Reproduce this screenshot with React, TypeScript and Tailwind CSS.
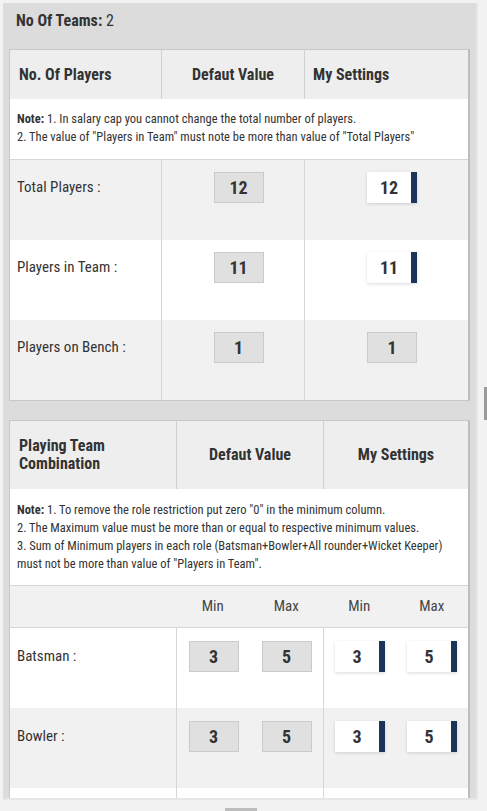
import React from "react";

const font =
  "font-['Roboto_Condensed','Liberation_Sans_Narrow','DejaVu_Sans_Condensed',Roboto,sans-serif]";

const DefaultBox = ({ value }: { value: number }) => (
  <div className="w-[50px] h-[31px] bg-[#e0e0e0] border border-[#cacaca] flex items-center justify-center text-[18px] font-bold text-[#333]">
    {value}
  </div>
);

const SettingBox = ({ value }: { value: number }) => (
  <div className="flex h-[31px] shadow-[0_1px_3px_rgba(0,0,0,0.15)]">
    <div className="w-[44px] bg-white flex items-center justify-center text-[18px] font-bold text-[#333]">
      {value}
    </div>
    <div className="w-[6px] bg-[#1c3458]" />
  </div>
);

const PlayerRow = ({
  label,
  def,
  mine,
  white,
  locked,
}: {
  label: string;
  def: number;
  mine: number;
  white?: boolean;
  locked?: boolean;
}) => (
  <div
    className={`grid grid-cols-[151px_143px_1fr] h-[80px] ${white ? "bg-white" : "bg-[#f2f1f2]"}`}
  >
    <div className="pl-[7px] pt-[12px]">
      <div className="h-[31px] flex items-center text-[15px] text-[#333]">{label}</div>
    </div>
    <div className="border-l border-[#d6d6d6] pt-[12px] pl-[11px] flex justify-center items-start">
      <DefaultBox value={def} />
    </div>
    <div className="border-l border-[#d6d6d6] pt-[12px] pl-[11px] flex justify-center items-start">
      {locked ? <DefaultBox value={mine} /> : <SettingBox value={mine} />}
    </div>
  </div>
);

const RoleRow = ({
  label,
  white,
}: {
  label: string;
  white?: boolean;
}) => (
  <div
    className={`grid grid-cols-[166px_147px_1fr] h-[80px] ${white ? "bg-white" : "bg-[#f2f1f2]"}`}
  >
    <div className="pl-[7px] pt-[13px]">
      <div className="h-[31px] flex items-center text-[15px] text-[#333]">{label}</div>
    </div>
    <div className="border-l border-[#d6d6d6] pt-[13px] grid grid-cols-2">
      <div className="flex justify-center items-start">
        <DefaultBox value={3} />
      </div>
      <div className="flex justify-center items-start">
        <DefaultBox value={5} />
      </div>
    </div>
    <div className="border-l border-[#d6d6d6] pt-[13px] grid grid-cols-2">
      <div className="flex justify-center items-start">
        <SettingBox value={3} />
      </div>
      <div className="flex justify-center items-start">
        <SettingBox value={5} />
      </div>
    </div>
  </div>
);

export default function App() {
  return (
    <div className={`relative min-h-[811px] bg-[#f2f2f2] pt-[3px] pl-[3px] overflow-hidden ${font}`}>
      {/* main panel */}
      <div className="w-[475px] h-[797px] bg-[#dcdcdc] border-r-2 border-b-2 border-[#e6e6e6] overflow-hidden px-[6px]">
        <div className="pt-[7px] pl-[7px] h-[46px] text-[16px] leading-[22px] text-[#333]">
          <span className="font-bold">No Of Teams:</span> 2
        </div>

        {/* No. of players */}
        <div className="border border-[#c8c8c8] border-r-2 border-r-[#bdbdbd]">
          <div className="grid grid-cols-[151px_143px_1fr] h-[49px] bg-[#eeeeee] text-[16px] font-bold text-[#333]">
            <div className="flex items-center pl-[9px]">No. Of Players</div>
            <div className="flex items-center justify-center border-l border-[#d0d0d0]">Defaut Value</div>
            <div className="flex items-center pl-[8px] border-l border-[#d0d0d0]">My Settings</div>
          </div>
          <div className="bg-white h-[61px] pl-[7px] pt-[11px] text-[12.5px] leading-[18px] text-[#333] border-b border-[#d6d6d6]">
            <p>
              <span className="font-bold">Note:</span> 1. In salary cap you cannot change the total number of players.
            </p>
            <p>2. The value of "Players in Team" must note be more than value of "Total Players"</p>
          </div>
          <PlayerRow label="Total Players :" def={12} mine={12} />
          <PlayerRow label="Players in Team :" def={11} mine={11} white />
          <PlayerRow label="Players on Bench :" def={1} mine={1} locked />
        </div>

        {/* Playing team combination */}
        <div className="mt-[19px] border border-[#c8c8c8] border-r-2 border-r-[#bdbdbd]">
          <div className="grid grid-cols-[166px_147px_1fr] h-[68px] bg-[#eeeeee] text-[16px] font-bold text-[#333]">
            <div className="flex items-center pl-[9px] leading-[18px]">
              Playing Team
              <br />
              Combination
            </div>
            <div className="flex items-center justify-center border-l border-[#d0d0d0]">Defaut Value</div>
            <div className="flex items-center justify-center border-l border-[#d0d0d0]">My Settings</div>
          </div>
          <div className="bg-white h-[97px] pl-[7px] pt-[12px] text-[12.5px] leading-[18px] text-[#333] border-b border-[#d6d6d6]">
            <p>
              <span className="font-bold">Note:</span> 1. To remove the role restriction put zero "0" in the minimum column.
            </p>
            <p>2. The Maximum value must be more than or equal to respective minimum values.</p>
            <p>3. Sum of Minimum players in each role (Batsman+Bowler+All rounder+Wicket Keeper)</p>
            <p>must not be more than value of "Players in Team".</p>
          </div>
          <div className="grid grid-cols-[166px_147px_1fr] h-[42px] bg-[#f2f1f2] border-b border-[#d6d6d6] text-[15px] text-[#444]">
            <div />
            <div className="grid grid-cols-2">
              <div className="flex items-center justify-center">Min</div>
              <div className="flex items-center justify-center">Max</div>
            </div>
            <div className="grid grid-cols-2">
              <div className="flex items-center justify-center">Min</div>
              <div className="flex items-center justify-center">Max</div>
            </div>
          </div>
          <RoleRow label="Batsman :" white />
          <RoleRow label="Bowler :" />
          {/* next row, only its top edge is in view */}
          <div className="grid grid-cols-[166px_147px_1fr] h-[20px] bg-white">
            <div />
            <div className="border-l border-[#d6d6d6]" />
            <div className="border-l border-[#d6d6d6]" />
          </div>
        </div>
      </div>

      {/* edge bits peeking in */}
      <div className="absolute left-[484px] top-[387px] w-[3px] h-[33px] bg-[#9a9a9a]" />
      <div className="absolute left-[225px] top-[808px] w-[32px] h-[3px] bg-[#bcbcbc]" />
    </div>
  );
}
